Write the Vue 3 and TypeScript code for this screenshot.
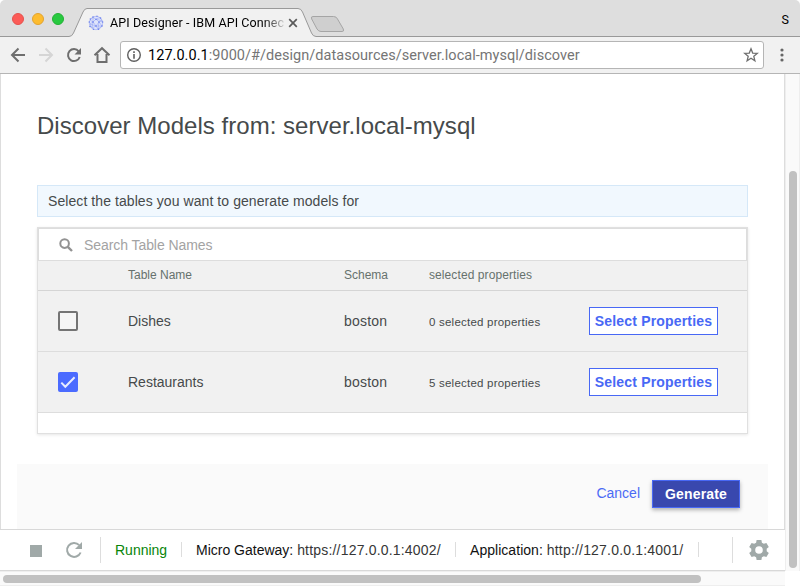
<script setup lang="ts">
import { ref } from 'vue'

interface TableRow {
  name: string
  schema: string
  count: number
  checked: boolean
}

const rows = ref<TableRow[]>([
  { name: 'Dishes', schema: 'boston', count: 0, checked: false },
  { name: 'Restaurants', schema: 'boston', count: 5, checked: true },
])
</script>

<template>
  <div class="window">
    <header class="titlebar">
      <svg class="tab-shape" width="800" height="37" viewBox="0 0 800 37">
        <path d="M0 36.500H69Q72 36.500 73.500 33L83 12Q84.500 8.500 87 8.500H298Q301 8.500 302.500 12L311.500 33Q313 36.500 316 36.500H800V37H0Z" fill="#f1f1f1" />
        <path d="M0 36.500H69Q72 36.500 73.500 33L83 12Q84.500 8.500 87 8.500H298Q301 8.500 302.500 12L311.500 33Q313 36.500 316 36.500H800" fill="none" stroke="#999" />
        <path d="M313 16.500H333.500Q336.500 16.500 337.500 19L343.300 29Q344.500 31.500 342 31.500H321Q318.500 31.500 317 29L311.700 19Q310.500 16.500 313 16.500Z" fill="#cfcfcf" stroke="#a5a5a5" />
      </svg>
      <span class="light red"></span><span class="light amber"></span><span class="light green"></span>
      <div class="tab">
        <svg width="16" height="16" viewBox="0 0 16 16" fill="none" stroke="#9dabf2" stroke-width=".65">
          <circle cx="8" cy="8" r="6.700" fill="#dfe4fb" />
          <path d="M2 5L5 2.500L8 4L12 2.500L14 6L11 7L14 11L10 14L8 11L4 13L2 9L5 7L2 5M5 2.500L5 7L8 4L11 7L8 11L5 7M11 7L10 14M2 9L8 11L14 11M8 4L14 6M4 13L5 7" />
          <g fill="#6b80ee" stroke="none">
            <circle cx="5" cy="2" r=".8" /><circle cx="9" cy="1.300" r=".7" /><circle cx="12.500" cy="3" r=".8" /><circle cx="14.600" cy="7" r=".8" />
            <circle cx="14" cy="11" r=".8" /><circle cx="10.500" cy="14.300" r=".8" /><circle cx="5.500" cy="14.200" r=".8" /><circle cx="2" cy="11.500" r=".8" />
            <circle cx="1.300" cy="7" r=".8" /><circle cx="2.300" cy="4" r=".7" /><circle cx="5" cy="7" r=".8" /><circle cx="8" cy="4.500" r=".7" />
            <circle cx="11" cy="7" r=".8" /><circle cx="8" cy="11" r=".8" />
          </g>
        </svg>
        <span class="tab-title">API Designer - IBM API Connec</span>
        <svg class="tab-close" width="10" height="10" viewBox="0 0 10 10"><path d="M1.200 1.200L8.800 8.800M8.800 1.200L1.200 8.800" stroke="#5a5a5a" stroke-width="1.700" /></svg>
      </div>
      <span class="profile">S</span>
    </header>

    <nav class="toolbar">
      <svg class="nav-icons" width="120" height="36" viewBox="0 0 120 36" fill="none" stroke="#6e6e6e" stroke-width="2">
        <path d="M25 18H12.500M18.500 11.500L12 18L18.500 24.500" />
        <path d="M39 18H51.500M45.500 11.500L52 18L45.500 24.500" stroke="#d5d5d5" />
        <path d="M78.700 14.300A6 6 0 1 0 79.700 20" />
        <path d="M81 11V17.500H74.500Z" fill="#6e6e6e" stroke="none" />
        <path d="M94.500 18.300L102 11.200L109.500 18.300M97.500 17V25H106.500V17" stroke-linejoin="miter" />
      </svg>
      <div class="address">
        <svg class="info" width="16" height="16" viewBox="0 0 16 16" fill="none" stroke="#5f5f5f"><circle cx="8" cy="8" r="6.300" stroke-width="1.400" /><path d="M8 7V11.700M8 4.300V5.900" stroke-width="1.600" /></svg>
        <span class="url"><b>127.0.0.1</b>:9000/#/design/datasources/server.local-mysql/discover</span>
        <svg class="star" width="16" height="16" viewBox="0 0 16 16"><path d="M8 1.800L9.700 6.100L14.300 6.400L10.800 9.300L11.900 13.800L8 11.300L4.100 13.800L5.200 9.300L1.700 6.400L6.300 6.100Z" fill="none" stroke="#6e6e6e" stroke-width="1.300" /></svg>
      </div>
      <svg class="menu" width="4" height="16" viewBox="0 0 4 16" fill="#666"><circle cx="2" cy="3" r="1.600" /><circle cx="2" cy="8" r="1.600" /><circle cx="2" cy="13" r="1.600" /></svg>
    </nav>

    <div class="viewport">
      <div class="page">
        <main class="content">
          <h1>Discover Models from: server.local-mysql</h1>
          <p class="notice"><span>Select the tables you want to generate models for</span></p>
          <section class="panel">
            <label class="search">
              <svg width="14" height="14" viewBox="0 0 14 14" fill="none" stroke="#929292"><circle cx="5.600" cy="5.600" r="4.300" stroke-width="2" /><path d="M8.800 8.800L13 13" stroke-width="2.400" /></svg>
              <span>Search Table Names</span>
            </label>
            <div class="row head"><span></span><span>Table Name</span><span>Schema</span><span class="head-props">selected properties</span><span></span></div>
            <div v-for="row in rows" :key="row.name" class="row">
              <span class="box" :class="{ checked: row.checked }" role="checkbox" :aria-checked="row.checked" @click="row.checked = !row.checked">
                <svg v-if="row.checked" width="20" height="20" viewBox="0 0 20 20"><path d="M3.300 10.600L7.300 14.700L16.600 5.300" fill="none" stroke="#e8ecff" stroke-width="2" /></svg>
              </span>
              <span class="name">{{ row.name }}</span>
              <span class="schema">{{ row.schema }}</span>
              <span class="count">{{ row.count }} selected properties</span>
              <button class="select"><span>Select Properties</span></button>
            </div>
            <div class="panel-foot"></div>
          </section>
        </main>
        <div class="actions"><a class="cancel">Cancel</a><button class="generate">Generate</button></div>
        <footer class="status">
          <span class="stop"></span>
          <svg class="restart" width="18" height="18" viewBox="0 0 18 18"><path d="M14.200 4.100A7 7 0 1 0 15.600 11.500" fill="none" stroke="#a0a9a8" stroke-width="2" /><path d="M17 1V8H10Z" fill="#a0a9a8" /></svg>
          <i class="rule tall"></i>
          <span class="running">Running</span>
          <i class="rule"></i>
          <span class="gateway">Micro Gateway: <em>https://127.0.0.1:4002/</em></span>
          <i class="rule"></i>
          <span class="application">Application: <em>http://127.0.0.1:4001/</em></span>
          <i class="rule"></i>
          <i class="rule tall last"></i>
          <svg class="gear" width="20" height="20" viewBox="0 0 20 20"><path fill="#a0a9a8" fill-rule="evenodd" d="M7.600 0H12.400L12.900 2.700L14.800 3.800L17.400 2.900L19.800 7L17.700 8.800V11.200L19.800 13L17.400 17.100L14.800 16.200L12.900 17.300L12.400 20H7.600L7.100 17.300L5.200 16.200L2.600 17.100L.2 13L2.300 11.200V8.800L.2 7L2.600 2.900L5.200 3.800L7.100 2.700ZM10 6.200A3.800 3.800 0 1 0 10 13.800A3.800 3.800 0 1 0 10 6.200Z" /></svg>
        </footer>
      </div>
      <div class="vtrack"><div class="vthumb"></div></div>
      <div class="htrack"><div class="hthumb"></div></div>
    </div>
  </div>
</template>

<style>
body { overflow: hidden; background: #fff; }
</style>

<style scoped>
* { box-sizing: border-box; }
.window { width: 800px; height: 586px; overflow: hidden; display: flex; flex-direction: column; font-family: "Liberation Sans", Arial, sans-serif; font-size: 14px; color: #464a4b; }
.titlebar { position: relative; height: 37px; flex: none; display: flex; align-items: center; background: #dedede; border-radius: 5px 5px 0 0; padding: 0 11px 0 12px; }
.tab-shape { position: absolute; left: 0; top: 0; }
.light { position: relative; width: 12px; height: 12px; border-radius: 50%; margin-right: 8px; }
.red { background: #fc5b57; border: 1px solid #e5524d; }
.amber { background: #fdbc2f; border: 1px solid #e2a330; }
.green { background: #28c940; border: 1px solid #24b135; }
.tab { position: relative; display: flex; align-items: center; height: 28px; margin: 8px 0 0 16px; width: 212px; }
.tab-title { width: 174px; margin-left: 6px; overflow: hidden; white-space: nowrap; font: 12.500px/18px Roboto, sans-serif; letter-spacing: .1px; color: #000; mask-image: linear-gradient(90deg, #000 154px, transparent 177px); }
.tab-close { margin-left: 4px; }
.profile { position: relative; margin: 2px 0 0 auto; font: 12.500px/16px Roboto, sans-serif; color: #000; }
.toolbar { height: 37px; flex: none; display: flex; align-items: center; background: #f1f1f1; border-bottom: 1px solid #b5b5b5; }
.address { width: 644px; height: 28px; display: flex; align-items: center; border: 1px solid #b5b5b5; border-radius: 3px; background: #fff; padding: 0 4px 0 5px; }
.url { margin: 1px 0 0 6px; font: 14.500px/20px Roboto, sans-serif; letter-spacing: .04px; color: #757575; white-space: nowrap; }
.url b { font-weight: 400; color: #000; }
.star { margin-left: auto; }
.menu { margin-left: 16px; }
.viewport { flex: 1; display: grid; grid-template-columns: 785px 15px; grid-template-rows: 497px 15px; }
.page { display: flex; flex-direction: column; min-height: 0; border-bottom: 1px solid #d8d8d8; }
.content { height: 390px; border-left: 1px solid #ddd; border-right: 1px solid #ddd; padding: 37px 36px 0; }
h1 { margin: 0; font-size: 24px; line-height: 30px; font-weight: 400; letter-spacing: .03px; white-space: nowrap; }
.notice { margin: 44px 0 0; height: 32px; border: 1px solid #d5e8f8; background: #f1f8fe; padding: 0 10px; line-height: 31px; letter-spacing: .075px; }
.panel { margin-top: 10px; height: 207px; border: 1px solid #e0e0e0; box-shadow: 0 1px 3px rgba(0, 0, 0, .1); }
.search { height: 33px; display: flex; align-items: center; border: 1px solid #ddd; padding-left: 20px; gap: 11px; color: #a3a3a3; letter-spacing: -.07px; }
.row { height: 61px; display: grid; grid-template-columns: 70px 216px 85px 160px 129px; align-items: center; padding-left: 20px; background: #f1f1f1; border-bottom: 1px solid #ddd; }
.head { height: 30px; font-size: 12px; line-height: 28px; color: #66716d; border-color: #d5d5d5; align-items: start; }
.head-props { letter-spacing: .09px; }
.box { width: 20px; height: 20px; border: 2px solid #747474; border-radius: 2px; background: #f5f5f5; }
.box.checked { border: 0; background: #4b6bff; }
.box svg { display: block; }
.schema { letter-spacing: .22px; }
.count { font-size: 11.500px; letter-spacing: .22px; padding-top: 2px; }
button { font-family: inherit; font-size: 14px; font-weight: 700; letter-spacing: .18px; padding: 0; border-radius: 0; white-space: nowrap; }
.select { height: 28px; border: 1px solid #4868f5; background: #fff; color: #4868f5; }
.actions { height: 65px; display: flex; align-items: center; justify-content: flex-end; margin: 0; padding: 0 44px 6px 0; border: solid #ddd; border-width: 0 1px; background: linear-gradient(#fafafa, #fafafa) 16px 0 / 751px 100% no-repeat; }
.cancel { color: #4b6bf5; margin: 0 12px 1px 0; }
.generate { width: 88px; height: 28px; color: #fff; background: #3948ae; border: 1px solid #4868f5; box-shadow: 0 2px 4px rgba(0, 0, 0, .3); }
.status { flex: 1; display: flex; align-items: center; border-top: 1px solid #d8d8d8; color: #111; white-space: nowrap; padding-bottom: 1px; }
.status em { font-style: normal; color: #363636; letter-spacing: .19px; }
.stop { width: 12px; height: 12px; margin: 2px 0 0 30px; background: #a0a9a8; }
.restart { margin: 1px 0 0 23px; }
.rule { width: 1px; height: 15px; background: #ddd; }
.tall { height: 26px; }
.restart + .rule { margin-left: 17px; }
.running { width: 66px; margin-left: 14px; color: #078507; }
.gateway { width: 259px; margin-left: 14px; }
.application { width: 228px; margin-left: 14px; letter-spacing: .04px; }
.last { margin-left: 33px; }
.gear { margin: 1px 0 0 16px; }
.vtrack { background: #fafafa; border-left: 1px solid #eee; border-right: 1px solid #eee; padding: 97px 0 0 3px; }
.vthumb { width: 8px; height: 397px; border-radius: 4px; background: #c1c1c1; }
.htrack { background: #fafafa; border-top: 1px solid #eee; border-bottom: 1px solid #eee; padding: 3px 0 0 3px; }
.hthumb { width: 698px; height: 8px; border-radius: 4px; background: #c1c1c1; }
</style>
